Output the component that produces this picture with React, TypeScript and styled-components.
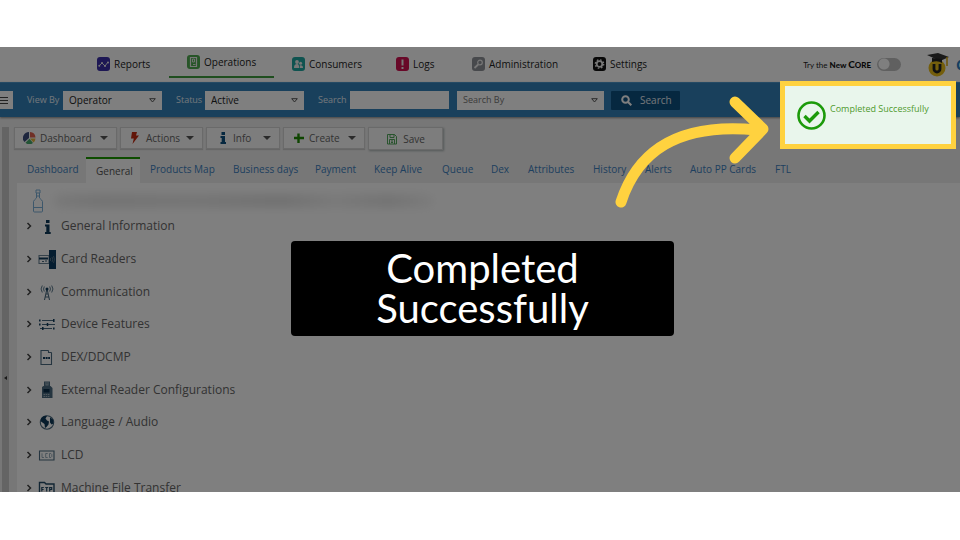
import React from "react";
import styled, { createGlobalStyle, css } from "styled-components";

const Global = createGlobalStyle`
  *, *::before, *::after { box-sizing: border-box; }
  body { margin: 0; background: #fff; font-family: "Open Sans", "Noto Sans", sans-serif; }
  button, input, select { font-family: inherit; margin: 0; }
`;

const Page = styled.div`
  min-height: 100vh;
  padding: 47px 0 48px;
  background: #fff;
`;

const Stage = styled.div`
  position: relative;
  height: calc(100vh - 95px);
  min-height: 300px;
  overflow: hidden;
  background: #fff;
`;

const Shade = styled.div`
  position: absolute;
  inset: 0;
  background: rgba(0, 0, 0, 0.5);
  pointer-events: none;
`;

const Console = styled.div`
  display: flex;
  flex-direction: column;
  height: 100%;
`;

const Header = styled.header`
  display: flex;
  align-items: center;
  flex: none;
  height: 35px;
  padding-left: 79px;
  overflow: hidden;
`;

const Nav = styled.nav`
  display: grid;
  grid-template-columns: 90px 105px 104px 76px 121px 90px;
  height: 35px;
`;

const NavLink = styled.a<{ $active?: boolean }>`
  display: flex;
  align-items: center;
  gap: 4px;
  height: ${(p) => (p.$active ? 31 : 34)}px;
  padding-left: 18px;
  color: #222;
  font-size: 10px;
  line-height: 16px;
  white-space: nowrap;
  text-decoration: none;
  border-bottom: ${(p) => (p.$active ? "2px solid #3f9c3f" : "0")};
`;

const HeaderEnd = styled.div`
  display: flex;
  align-items: center;
  margin-left: auto;
  height: 35px;
`;

const CoreLabel = styled.label`
  display: flex;
  align-items: center;
  gap: 6px;
  color: #222;
  font-family: Lato, sans-serif;
  font-size: 8px;
  line-height: 12px;
  white-space: nowrap;
  b { font-weight: 900; color: #111; }
  big { font-size: 10px; }
  small { font-size: 8px; }
`;

const Switch = styled.input`
  appearance: none;
  width: 24px;
  height: 13px;
  margin: 0;
  border: 0;
  border-radius: 7px;
  background: radial-gradient(circle at 7px 6px, #fff 5px, #c0c0c0 6px);
`;

const Mascot = styled.svg`
  width: 24px;
  height: 24px;
  margin: 0 6px 0 25px;
`;

const Cropped = styled.span`
  width: 4px;
  overflow: hidden;
  color: #2a7ec0;
  font-size: 14px;
  font-weight: 700;
`;

const FilterBar = styled.form`
  display: flex;
  align-items: center;
  flex: none;
  height: 35px;
  background: #3280b8;
  border-top: 1px solid #4b94c8;
  box-shadow: 0 1px 2px #888;
  position: relative;
`;

const MenuButton = styled.button`
  display: flex;
  align-items: center;
  justify-content: center;
  width: 13px;
  height: 18px;
  margin-right: 14px;
  padding: 0 5px 0 0;
  border: 0;
  background: #fff;
`;

const FieldLabel = styled.label<{ $width: number }>`
  width: ${(p) => p.$width}px;
  color: #e4eef6;
  font-size: 9px;
  line-height: 16px;
  white-space: nowrap;
`;

const SelectWrap = styled.span<{ $width: number; $gap: number }>`
  display: grid;
  align-items: center;
  width: ${(p) => p.$width}px;
  height: 19px;
  margin-right: ${(p) => p.$gap}px;
  background: #fff;
  > * { grid-area: 1 / 1; }
  > svg { justify-self: end; margin-right: 6px; pointer-events: none; }
`;

const Select = styled.select<{ $hint?: boolean }>`
  appearance: none;
  width: 100%;
  height: 19px;
  padding: 0 16px 0 6px;
  border: 0;
  background: transparent;
  color: ${(p) => (p.$hint ? "#777" : "#222")};
  font-size: ${(p) => (p.$hint ? 9 : 10)}px;
  line-height: 16px;
`;

const TextInput = styled.input`
  width: 99px;
  height: 18px;
  margin-right: 8px;
  padding: 0 6px;
  border: 0;
  background: #fff;
  font-size: 10px;
`;

const SearchButton = styled.button`
  display: flex;
  align-items: center;
  gap: 8px;
  width: 69px;
  height: 19px;
  padding: 0 0 0 10px;
  border: 0;
  border-radius: 1px;
  background: #0d5080;
  color: #e8eef4;
  font-size: 10px;
  line-height: 16px;
`;

const Body = styled.div`
  display: flex;
  flex: 1;
  min-height: 0;
  background: #eee;
`;

const Splitter = styled.div`
  display: flex;
  align-items: center;
  flex: none;
  width: 7px;
  margin: 10px 7px 0 2px;
  padding-top: 136px;
  background: #c8c8c8;
`;

const Work = styled.main`
  display: flex;
  flex-direction: column;
  flex: 1;
  min-width: 0;
`;

const Toolbar = styled.div`
  display: grid;
  grid-template-columns: 103px 83px 74px 82px 75px;
  column-gap: 3px;
  flex: none;
  height: 40px;
  padding: 10px 0 0;
  margin-left: -2px;
`;

const ToolButton = styled.button<{ $raised?: boolean; $inset?: number }>`
  display: flex;
  align-items: center;
  justify-content: ${(p) => (p.$raised ? "center" : "flex-start")};
  gap: 4px;
  height: ${(p) => (p.$raised ? 23 : 22)}px;
  padding: 0 8px 0 ${(p) => p.$inset ?? 8}px;
  border: 1px solid #d4d4d4;
  background: #fafafa;
  color: #666;
  font-size: 10px;
  line-height: 16px;
  box-shadow: ${(p) => (p.$raised ? "1px 1px 2px #a8b0b0" : "0 1px 1px #ccc")};
`;

const Caret = styled.i`
  margin-left: auto;
  border: 4px solid transparent;
  border-top: 4px solid #555;
  border-bottom: 0;
`;

const Tabs = styled.div`
  display: grid;
  grid-template-columns: 69px 54px 83px 82px 59px 68px 49px 37px 65px 52px 45px 85px 35px;
  flex: none;
  height: 26px;
  margin-left: 1px;
`;

const Tab = styled.button<{ $active?: boolean }>`
  padding: 0 0 2px 10px;
  border: 0;
  background: transparent;
  color: #3d80be;
  font-size: 10px;
  line-height: 24px;
  text-align: left;
  white-space: nowrap;
  ${(p) =>
    p.$active &&
    css`
      padding-bottom: 0;
      border-top: 2px solid #1c9a00;
      background: #fff;
      color: #555;
    `}
`;

const Panel = styled.section`
  flex: 1;
  min-height: 0;
  margin-left: 1px;
  overflow: hidden;
  background: #fff;
`;

const MachineTitle = styled.div`
  display: flex;
  align-items: center;
  gap: 10px;
  height: 27px;
  padding: 9px 0 0 15px;
`;

const Redacted = styled.span`
  width: 380px;
  height: 14px;
  border-radius: 6px;
  background: linear-gradient(90deg, #f2f2f2, #e8e8e8 12%, #ececec 36%, #e4e4e4 60%, #f4f4f4 74%, #e8e8e8 88%, #f8f8f8);
  filter: blur(4px);
`;

const List = styled.div`
  display: grid;
  grid-auto-rows: 32px 33px 33px;
`;

const Row = styled.button`
  display: grid;
  grid-template-columns: 12px 20px 1fr;
  align-items: center;
  padding: 0 0 0 9px;
  border: 0;
  background: transparent;
  color: #666;
  font-size: 12px;
  line-height: 18px;
  text-align: left;
  > svg { display: block; }
  > span { padding-left: 3px; }
`;

const Toast = styled.div`
  position: absolute;
  top: 34px;
  right: 4px;
  display: flex;
  gap: 4px;
  width: 176px;
  height: 68px;
  padding: 14px 0 0 12px;
  border: 5px solid #ffd23f;
  background: #e9f6ec;
  color: #4f9a2c;
  font-size: 9px;
  line-height: 18px;
  white-space: nowrap;
`;

const Arrow = styled.svg`
  position: absolute;
  top: 45px;
  right: 190px;
  width: 160px;
  height: 120px;
`;

const Caption = styled.div`
  position: absolute;
  top: 194px;
  left: calc(50% + 2px);
  width: 383px;
  margin-left: -191px;
  padding: 7px 60px 8px;
  border-radius: 4px;
  background: #000;
  color: #fff;
  font-family: Lato, sans-serif;
  font-size: 40px;
  line-height: 40px;
  text-align: center;
`;

const navItems = [
  { name: "Reports", color: "#3a2fa8" },
  { name: "Operations", color: "#4faa50" },
  { name: "Consumers", color: "#1fa7a0" },
  { name: "Logs", color: "#d01050" },
  { name: "Administration", color: "#8e9298" },
  { name: "Settings", color: "#111" },
];

const NavIcon = ({ name, color }: { name: string; color: string }) => (
  <svg width="13" height="14" viewBox="0 0 13 14" fill="none" stroke="#eee" strokeWidth="1.2" aria-hidden="true">
    <rect width="13" height="14" rx="3" fill={color} stroke="none" />
    {name === "Reports" && (
      <>
        <path d="M2 9l3-3 3 3 3-4" strokeWidth=".9" />
        <g fill="#eee" stroke="none"><circle cx="2.3" cy="8.8" r="1" /><circle cx="5" cy="6" r="1" /><circle cx="8" cy="9" r="1" /><circle cx="11" cy="5.5" r="1" /></g>
      </>
    )}
    {name === "Operations" && <><path d="M3.500 2.500h6v9h-6z" /><path d="M5.500 4h2v3h-2zM6 9.500h2.500" strokeWidth=".9" /></>}
    {name === "Consumers" && (
      <g fill="#eee" stroke="none"><circle cx="5" cy="5" r="1.900" /><path d="M2 11c0-3 1-4 3-4s2 2 2.200 4z" /><circle cx="8.600" cy="6.300" r="1.500" /><path d="M7.800 11V8.500c2-.5 3.200.5 3.200 2.500z" /></g>
    )}
    {name === "Logs" && <path d="M6.500 2.500v6M6.500 10v2" strokeWidth="2" />}
    {name === "Administration" && <><circle cx="8" cy="5.500" r="2.300" /><path d="M6.200 7.500l-3.700 3.500" strokeWidth="1.800" /></>}
    {name === "Settings" && (
      <><circle cx="6.500" cy="7" r="2.800" strokeWidth="1.800" /><circle cx="6.500" cy="7" r="4.200" strokeWidth="1.300" strokeDasharray="1.650 1.650" /></>
    )}
  </svg>
);

const Down = () => (
  <svg width="7" height="5" viewBox="0 0 7 5" fill="none" stroke="#555" aria-hidden="true"><path d="M.7.7h5.600L3.500 4z" /></svg>
);

const ToolIcon = ({ name }: { name: string }) => (
  <svg width="13" height="12" viewBox="0 0 13 12" aria-hidden="true">
    {name === "Dashboard" && (
      <>
        <path d="M6 6V0a6 6 0 0 0-4.500 10z" fill="#3d4c7d" />
        <path d="M7 5.500V0a6 6 0 0 1 5.500 5.500z" fill="#e0604c" />
        <path d="M7 6.500h5.500a6 6 0 0 1-2 4z" fill="#e6b53c" />
        <path d="M6.500 6.800L10 11a6 6 0 0 1-7.500-.2z" fill="#46a86a" />
      </>
    )}
    {name === "Actions" && <path d="M3 0h5L7 3.500h3L3.500 12l1.300-5.500H2z" fill="#c42a10" />}
    {name === "Info" && <path d="M5.500 0h3.500v3H5.500zM4.500 4H9v6h1v2H4.500v-2h1.200V6H4.500z" fill="#0d5080" />}
    {name === "Create" && <path d="M5.300 1.500h2.400v3.300H12v2.400H7.700v3.800H5.300V7.200H2V4.800h3.300z" fill="#1c8a00" />}
    {name === "Save" && <path d="M1.500 1.500h7l2 2v7.500h-9zM4 1.500v3h4v-3M3.500 11V6.500h5V11M5 8h2M5 9.500h2" fill="none" stroke="#3f9f4a" strokeWidth=".9" />}
  </svg>
);

const ink = "#0f3a5a";
const soft = "#4a6a80";
const RowIcon = ({ name }: { name: string }) => (
  <svg width="20" height="20" viewBox="0 0 20 20" fill="none" stroke={soft} strokeWidth="1.1" aria-hidden="true">
    {name === "General Information" && <path d="M8 4h3.500v3H8zM7 8.500h4.500V16h1.200v2H7v-2h1.300v-5.500H7z" fill={ink} stroke="none" />}
    {name === "Card Readers" && (
      <><path d="M1 6.500h10v8H1z" stroke="#6c8496" /><path d="M1 9.500h9" stroke={ink} strokeWidth="2" /><path d="M4 12.500h2M8 11v2" /><path d="M11 1h7v19h-7z" fill="#0a3a60" stroke="none" /><path d="M12.500 9v3M14 8q1.500 2.500 0 5M15.500 7q2 3.500 0 7" stroke="#60788c" strokeWidth=".8" /></>
    )}
    {name === "Communication" && (
      <><path d="M8.700 8l-2.200 10M9.300 8l2.200 10M7.500 12h3M7 15h4" /><circle cx="9" cy="7" r="1.500" fill={ink} stroke="none" /><path d="M6.300 4.500q-1.500 2.500 0 5M11.700 4.500q1.500 2.500 0 5M4.300 3.500q-2.500 3.500 0 7M13.700 3.500q2.500 3.500 0 7" strokeWidth=".9" /></>
    )}
    {name === "Device Features" && (
      <><path d="M4 6.500h12M4 10.500h13M2 14.500h12" /><path d="M1.800 5.500v2M1.800 9.500v2M15.800 5v3M9.500 9v3M4.800 13v3M15.800 13.500v2" stroke={ink} strokeWidth="1.500" /></>
    )}
    {name === "DEX/DDCMP" && (
      <><path d="M3 9V3.500h7.500M3 9v8.500h10.500V5.500M10.500 3.500v2h3" /><path d="M5 11h7" stroke={ink} strokeWidth="2" strokeDasharray="2 .6" /></>
    )}
    {name === "External Reader Configurations" && (
      <><path d="M6 1.500h6V7H6z" fill={soft} stroke="none" /><path d="M8 2v3h2V2" stroke="#9fb0bc" /><path d="M4 7l1.500-1h7L14.500 8v10H4z" fill={soft} stroke="none" /><path d="M5.500 9h6v3.500h-6z" fill="#092c48" stroke="none" /><path d="M5.500 14.500h6M5.500 16.500h6" stroke="#a0b0bc" strokeDasharray="1.500 .7" /></>
    )}
    {name === "Language / Audio" && (
      <><circle cx="9" cy="10.500" r="6.700" /><path d="M3 6.500c2-3 5-3 6-2.500L7.500 6.500l1.500 2 2 1-.5 3-2 2.500-1.500 1-.5-4L3 9.500zM12 5.500l3 2 .5 4-2 1-1.500-2z" fill={ink} stroke="none" /></>
    )}
    {name === "LCD" && (
      <><path d="M1.500 6h14.500v9H1.500z" /><path d="M4 8.300v4.200h2M9.700 8.500H7.700v4h2M11.500 8.500v4h1.300l1-1v-2l-1-1z" stroke="#7f98a8" strokeWidth=".8" /></>
    )}
    {name === "Machine File Transfer" && (
      <g stroke="#234a66"><path d="M1.500 16V4.500h5L8 6h8v10z" strokeWidth="1.400" /><path d="M3.800 13.500V9.500h2M3.800 11.500h1.800M7.200 9.500h3M8.700 9.500v4M11.700 13.500v-4h2v2h-2" strokeWidth="1.200" /></g>
    )}
  </svg>
);

const tools = [
  { name: "Dashboard" },
  { name: "Actions" },
  { name: "Info", inset: 9 },
  { name: "Create" },
  { name: "Save" },
];
const tabs = ["Dashboard", "General", "Products Map", "Business days", "Payment", "Keep Alive", "Queue", "Dex", "Attributes", "History", "Alerts", "Auto PP Cards", "FTL"];
const sections = ["General Information", "Card Readers", "Communication", "Device Features", "DEX/DDCMP", "External Reader Configurations", "Language / Audio", "LCD", "Machine File Transfer"];

export default function App() {
  return (
    <Page>
      <Global />
      <Stage>
        <Console>
          <Header>
            <Nav>
              {navItems.map((n) => (
                <NavLink key={n.name} href="#" $active={n.name === "Operations"}>
                  <NavIcon {...n} />
                  {n.name}
                </NavLink>
              ))}
            </Nav>
            <HeaderEnd>
              <CoreLabel>
                <span>Try the <b>New <big>C</big><small>ORE</small></b></span>
                <Switch type="checkbox" role="switch" />
              </CoreLabel>
              <Mascot viewBox="0 0 24 24" aria-hidden="true">
                <circle cx="11" cy="15" r="8.500" fill="#e8bc18" />
                <path d="M8 11v5a3 3 0 0 0 6 0v-5" fill="none" stroke="#222" strokeWidth="2.800" />
                <path d="M1 2l11-2 11 4-9 4z" fill="#333" />
                <path d="M6 5v4q6-2 10 1V6z" fill="#222" />
                <path d="M21 4v9" stroke="#d8a810" strokeWidth="1.500" />
              </Mascot>
              <Cropped>C</Cropped>
            </HeaderEnd>
          </Header>
          <FilterBar onSubmit={(e) => e.preventDefault()}>
            <MenuButton type="button" aria-label="Menu">
              <svg width="8" height="9" viewBox="0 0 8 9" stroke="#444" aria-hidden="true"><path d="M0 1.500h8M0 4.500h8M0 7.500h8" /></svg>
            </MenuButton>
            <FieldLabel htmlFor="view" $width={36}>View By</FieldLabel>
            <SelectWrap $width={99} $gap={14}>
              <Select id="view"><option>Operator</option></Select>
              <Down />
            </SelectWrap>
            <FieldLabel htmlFor="status" $width={29}>Status</FieldLabel>
            <SelectWrap $width={99} $gap={14}>
              <Select id="status"><option>Active</option></Select>
              <Down />
            </SelectWrap>
            <FieldLabel htmlFor="search" $width={32}>Search</FieldLabel>
            <TextInput id="search" />
            <SelectWrap $width={147} $gap={7}>
              <Select $hint aria-label="Search By"><option>Search By</option></Select>
              <Down />
            </SelectWrap>
            <SearchButton type="submit">
              <svg width="11" height="11" viewBox="0 0 11 11" fill="none" stroke="#fff" strokeWidth="2" aria-hidden="true"><circle cx="4.500" cy="4.500" r="3.300" /><path d="M7 7l3.300 3.300" /></svg>
              Search
            </SearchButton>
          </FilterBar>
          <Body>
            <Splitter>
              <svg width="7" height="6" viewBox="0 0 7 6" aria-hidden="true"><path d="M5 1v4L2 3z" fill="#333" /></svg>
            </Splitter>
            <Work>
              <Toolbar>
                {tools.map((t) => (
                  <ToolButton key={t.name} type="button" $raised={t.name === "Save"} $inset={t.inset}>
                    <ToolIcon name={t.name} />
                    {t.name}
                    {t.name !== "Save" && <Caret />}
                  </ToolButton>
                ))}
              </Toolbar>
              <Tabs role="tablist">
                {tabs.map((t) => (
                  <Tab key={t} type="button" role="tab" aria-selected={t === "General"} $active={t === "General"}>{t}</Tab>
                ))}
              </Tabs>
              <Panel>
                <MachineTitle>
                  <svg width="12" height="24" viewBox="0 0 12 24" fill="none" stroke="#7aaed6" aria-hidden="true">
                    <path d="M4 1h4v3H4zM4.500 4v5Q2 11 1.500 12.500V22q0 1 1 1h7q1 0 1-1v-9.500Q10 11 7.500 9V4M1.500 18.500h9M4.500 7h3" />
                  </svg>
                  <Redacted />
                </MachineTitle>
                <List>
                  {sections.map((s) => (
                    <Row key={s} type="button">
                      <svg width="6" height="8" viewBox="0 0 6 8" fill="none" stroke="#444" strokeWidth="1.500" aria-hidden="true"><path d="M1.500 1l3 3-3 3" /></svg>
                      <RowIcon name={s} />
                      <span>{s}</span>
                    </Row>
                  ))}
                </List>
              </Panel>
            </Work>
          </Body>
        </Console>
        <Shade />
        <Toast role="status">
          <svg width="29" height="31" viewBox="0 0 29 31" fill="none" stroke="#1c9a0a" aria-hidden="true">
            <circle cx="14.500" cy="15.500" r="13" strokeWidth="2.600" />
            <path d="M7.500 16l5 5 9-9" strokeWidth="3.400" />
          </svg>
          Completed Successfully
        </Toast>
        <Arrow viewBox="610 92 160 120" fill="none" stroke="#ffd23f" strokeWidth="11" strokeLinecap="round" strokeLinejoin="round" aria-hidden="true">
          <path d="M621 202C637 153 676 122 757 130M735 102l28 27-28 29" />
        </Arrow>
        <Caption>Completed Successfully</Caption>
      </Stage>
    </Page>
  );
}
